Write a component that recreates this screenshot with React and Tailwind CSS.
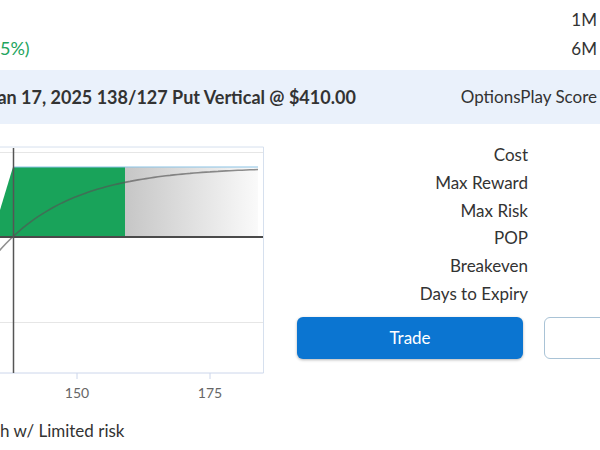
import React from "react";

const labels = ["Cost", "Max Reward", "Max Risk", "POP", "Breakeven", "Days to Expiry"];

// y values here are relative to the chart svg (top = page y 124)
const curve = () => {
  const pts = [];
  for (let x = -2; x <= 258; x += 4) {
    const y = 167 + (250 - 167) * Math.exp(-0.0135 * x) - 124;
    pts.push(`${x},${y.toFixed(1)}`);
  }
  return "M" + pts.join(" L");
};

const PayoffChart = () => (
  <svg width="270" height="286" viewBox="0 0 270 286" className="block shrink-0">
    <defs>
      <linearGradient id="fade" x1="0" y1="0" x2="1" y2="0">
        <stop offset="0" stopColor="#c6c6c6" />
        <stop offset="1" stopColor="#fafafa" />
      </linearGradient>
    </defs>
    {/* frame + grid */}
    <line x1="0" y1="23" x2="263.5" y2="23" stroke="#d6e0ee" strokeWidth="1" />
    <line x1="263.5" y1="23" x2="263.5" y2="249" stroke="#d6e0ee" strokeWidth="1" />
    <line x1="0" y1="249" x2="263.5" y2="249" stroke="#ccd6eb" strokeWidth="1" />
    <line x1="0" y1="28.5" x2="263" y2="28.5" stroke="#e6e6e6" strokeWidth="1" />
    <line x1="0" y1="198.5" x2="263" y2="198.5" stroke="#e6e6e6" strokeWidth="1" />
    {/* areas */}
    <rect x="125" y="43" width="133" height="70" fill="url(#fade)" />
    <polygon points="0,86 13,43 125,43 125,113 0,113" fill="#19a35a" />
    <line x1="13" y1="43" x2="258" y2="43" stroke="#8cc3e6" strokeWidth="1.2" />
    {/* zero + price lines */}
    <line x1="0" y1="113" x2="263" y2="113" stroke="#4a4a4a" strokeWidth="2" />
    <line x1="13.5" y1="24" x2="13.5" y2="249" stroke="#555" strokeWidth="1.5" />
    <path d={curve()} fill="none" stroke="#555" strokeOpacity="0.65" strokeWidth="1.6" />
    {/* ticks */}
    <line x1="77" y1="249" x2="77" y2="255" stroke="#ccd6eb" />
    <line x1="210" y1="249" x2="210" y2="255" stroke="#ccd6eb" />
    <text x="77" y="274" textAnchor="middle" fontSize="14" fill="#666" fontFamily="Lato, sans-serif">
      150
    </text>
    <text x="210" y="274" textAnchor="middle" fontSize="14" fill="#666" fontFamily="Lato, sans-serif">
      175
    </text>
  </svg>
);

const App = () => {
  return (
    <div className="w-[600px] h-[450px] overflow-hidden bg-white text-[#333] font-['Lato',sans-serif]">
      <div className="h-[36px] pt-[8px] flex justify-end pr-[3px]">
        <span className="text-[17px] leading-[23px]">1M</span>
      </div>
      <div className="h-[34px] pt-[1px] flex justify-between pr-[3px]">
        <span className="text-[18px] leading-[23px] text-[#22a45d]">5%)</span>
        <span className="text-[17px] leading-[23px]">6M</span>
      </div>
      <div className="h-[54px] bg-[#eaf1fb] flex items-center justify-between pr-[3px]">
        <span className="ml-[-10px] text-[18px] font-bold whitespace-nowrap">Jan 17, 2025 138/127 Put Vertical @ $410.00</span>
        <span className="text-[17px]">OptionsPlay Score</span>
      </div>
      <div className="flex">
        <PayoffChart />
        <div className="flex-1 pl-[27px] pt-[17px]">
          <div className="w-[231px] flex flex-col items-end">
            {labels.map((l) => (
              <div key={l} className="text-[17px] leading-[27.8px]">
                {l}
              </div>
            ))}
          </div>
          <div className="flex gap-[21px] mt-[9px]">
            <button className="w-[226px] h-[42px] shrink-0 rounded-[6px] bg-[#0b75d1] text-white text-[17px] shadow-[0_1px_3px_rgba(0,0,0,0.3)]">
              Trade
            </button>
            <button className="w-[120px] h-[42px] shrink-0 rounded-[6px] border border-[#a9c3d6] bg-white"></button>
          </div>
        </div>
      </div>
      <div className="mt-[9px] text-[17px] leading-[24px]">
        <span>h w/ Limited risk</span>
      </div>
    </div>
  );
};

export default App;
